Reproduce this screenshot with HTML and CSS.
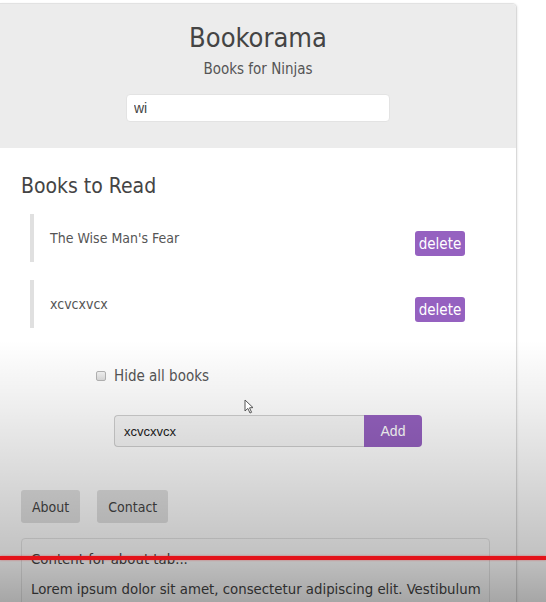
FILE: index.html
```html
<!DOCTYPE html>
<html>
<head>
<meta charset="utf-8">
<link rel="stylesheet" href="styles.css">
</head>
<body>
<div class="card">
  <header class="header">
    <h1 class="title">Bookorama</h1>
    <p class="subtitle">Books for Ninjas</p>
    <input class="search" type="text" value="wi">
  </header>
  <section class="main">
    <h2 class="heading">Books to Read</h2>
    <ul class="books">
      <li class="book"><span class="name">The Wise Man's Fear</span><button class="delete">delete</button></li>
      <li class="book"><span class="name">xcvcxvcx</span><button class="delete">delete</button></li>
    </ul>
    <label class="hide"><span class="check"></span><span>Hide all books</span></label>
    <form class="add">
      <input class="add-input" type="text" value="xcvcxvcx">
      <button class="add-btn" type="button">Add</button>
    </form>
    <div class="tabs">
      <span class="tab">About</span>
      <span class="tab">Contact</span>
    </div>
    <div class="panel">
      <p class="panel-title">Content for about tab...</p>
      <p class="panel-text">Lorem ipsum dolor sit amet, consectetur adipiscing elit. Vestibulum id nunc porta urna ornare rhoncus. Ut convallis ante et</p>
    </div>
  </section>
</div>
<div class="shade"></div>
<svg class="cursor" width="12" height="16" viewBox="0 0 12 16"><path d="M1 1 L1 12 L3.8 9.4 L6 14 L7.6 13.3 L5.5 8.8 L9 8.6 Z" fill="#fff" stroke="#555" stroke-width="1"/></svg>
<div class="redline"></div>
</body>
</html>
```
FILE: styles.css
```css
html, body {
  margin: 0;
  padding: 0;
}
body {
  position: relative;
  width: 546px;
  height: 602px;
  overflow: hidden;
  background: #fff;
  font-family: "DejaVu Sans Condensed", "DejaVu Sans", sans-serif;
  font-stretch: condensed;
  color: #444;
}
.card {
  width: 516px;
  margin-top: 3px;
  border-top: 1px solid #e2e2e2;
  border-right: 1px solid #d9d9d9;
  border-top-right-radius: 5px;
  box-shadow: 1px 0 2px rgba(0,0,0,0.06);
  min-height: 700px;
}
.header {
  background: #ececec;
  text-align: center;
  padding: 16px 0 26px;
  border-top-right-radius: 4px;
}
.title {
  margin: 0;
  font-size: 27px;
  line-height: 36px;
  font-weight: normal;
  color: #444;
}
.subtitle {
  margin: 3px 0 0;
  font-size: 15px;
  line-height: 20px;
  color: #555;
}
.search {
  display: block;
  margin: 15px auto 0;
  box-sizing: border-box;
  width: 264px;
  height: 28px;
  border: 1px solid #e3e3e3;
  border-radius: 4px;
  background: #fff;
  padding: 0 7px;
  font-family: "Liberation Sans", Arial, sans-serif;
  font-size: 14px;
  color: #444;
  outline: none;
}
.main {
  padding: 0 21px;
}
.heading {
  margin: 26px 0 0;
  font-size: 21px;
  line-height: 24px;
  font-weight: normal;
  color: #444;
}
.books {
  list-style: none;
  margin: 16px 0 0;
  padding: 0 0 0 9px;
}
.book {
  display: flex;
  align-items: center;
  justify-content: space-between;
  height: 48px;
  border-left: 4px solid #e0e0e0;
  padding: 0 30px 0 16px;
  font-size: 14px;
  color: #555;
}
.book + .book {
  margin-top: 18px;
}
.delete {
  margin-top: 11px;
  height: 25px;
  width: 50px;
  padding: 0;
  border: none;
  border-radius: 3px;
  background: #9561c0;
  color: #fff;
  font-family: inherit;
  font-stretch: condensed;
  font-size: 15px;
}
.hide {
  display: flex;
  align-items: center;
  margin: 38px 0 0 75px;
  height: 20px;
  font-size: 15px;
  color: #555;
}
.check {
  box-sizing: border-box;
  width: 10px;
  height: 10px;
  border: 1px solid #b5b5b5;
  border-radius: 2px;
  background: linear-gradient(#f4f4f4, #dcdcdc);
  margin-right: 8px;
}
.add {
  display: flex;
  margin: 29px 0 0 93px;
  height: 32px;
}
.add-input {
  box-sizing: border-box;
  width: 250px;
  height: 32px;
  border: 1px solid #cfcfcf;
  border-right: none;
  border-radius: 4px 0 0 4px;
  background: #f6f6f6;
  padding: 0 9px;
  font-family: "Liberation Sans", Arial, sans-serif;
  font-size: 13px;
  color: #222;
  outline: none;
}
.add-btn {
  width: 58px;
  height: 32px;
  border: none;
  border-radius: 0 4px 4px 0;
  background: #9561c0;
  color: #fff;
  font-family: "Liberation Sans", Arial, sans-serif;
  font-size: 14px;
  padding: 0;
}
.tabs {
  display: flex;
  gap: 17px;
  margin-top: 43px;
}
.tab {
  display: flex;
  align-items: center;
  height: 33px;
  padding: 0 11px;
  border-radius: 3px;
  background: #e1e1e1;
  font-size: 14px;
  color: #444;
}
.panel {
  box-sizing: border-box;
  width: 469px;
  margin-top: 15px;
  border: 1px solid #e6e6e6;
  border-radius: 4px;
  padding: 10px 6px 10px 9px;
}
.panel-title, .panel-text {
  margin: 0;
  font-size: 14.8px;
  line-height: 20px;
  color: #444;
}
.panel-text {
  margin-top: 10px;
}
.shade {
  position: absolute;
  left: 0;
  top: 0;
  width: 546px;
  height: 602px;
  pointer-events: none;
  background: linear-gradient(to bottom,
    rgba(0,0,0,0) 0px,
    rgba(0,0,0,0) 340px,
    rgba(0,0,0,0.07) 410px,
    rgba(0,0,0,0.17) 495px,
    rgba(0,0,0,0.24) 555px,
    rgba(0,0,0,0.35) 602px);
}
.cursor {
  position: absolute;
  left: 244px;
  top: 399px;
}
.redline {
  position: absolute;
  left: 0;
  top: 556px;
  width: 546px;
  height: 4px;
  background: #e3131a;
  box-shadow: 0 0 2px rgba(230,20,30,0.6);
}
```
